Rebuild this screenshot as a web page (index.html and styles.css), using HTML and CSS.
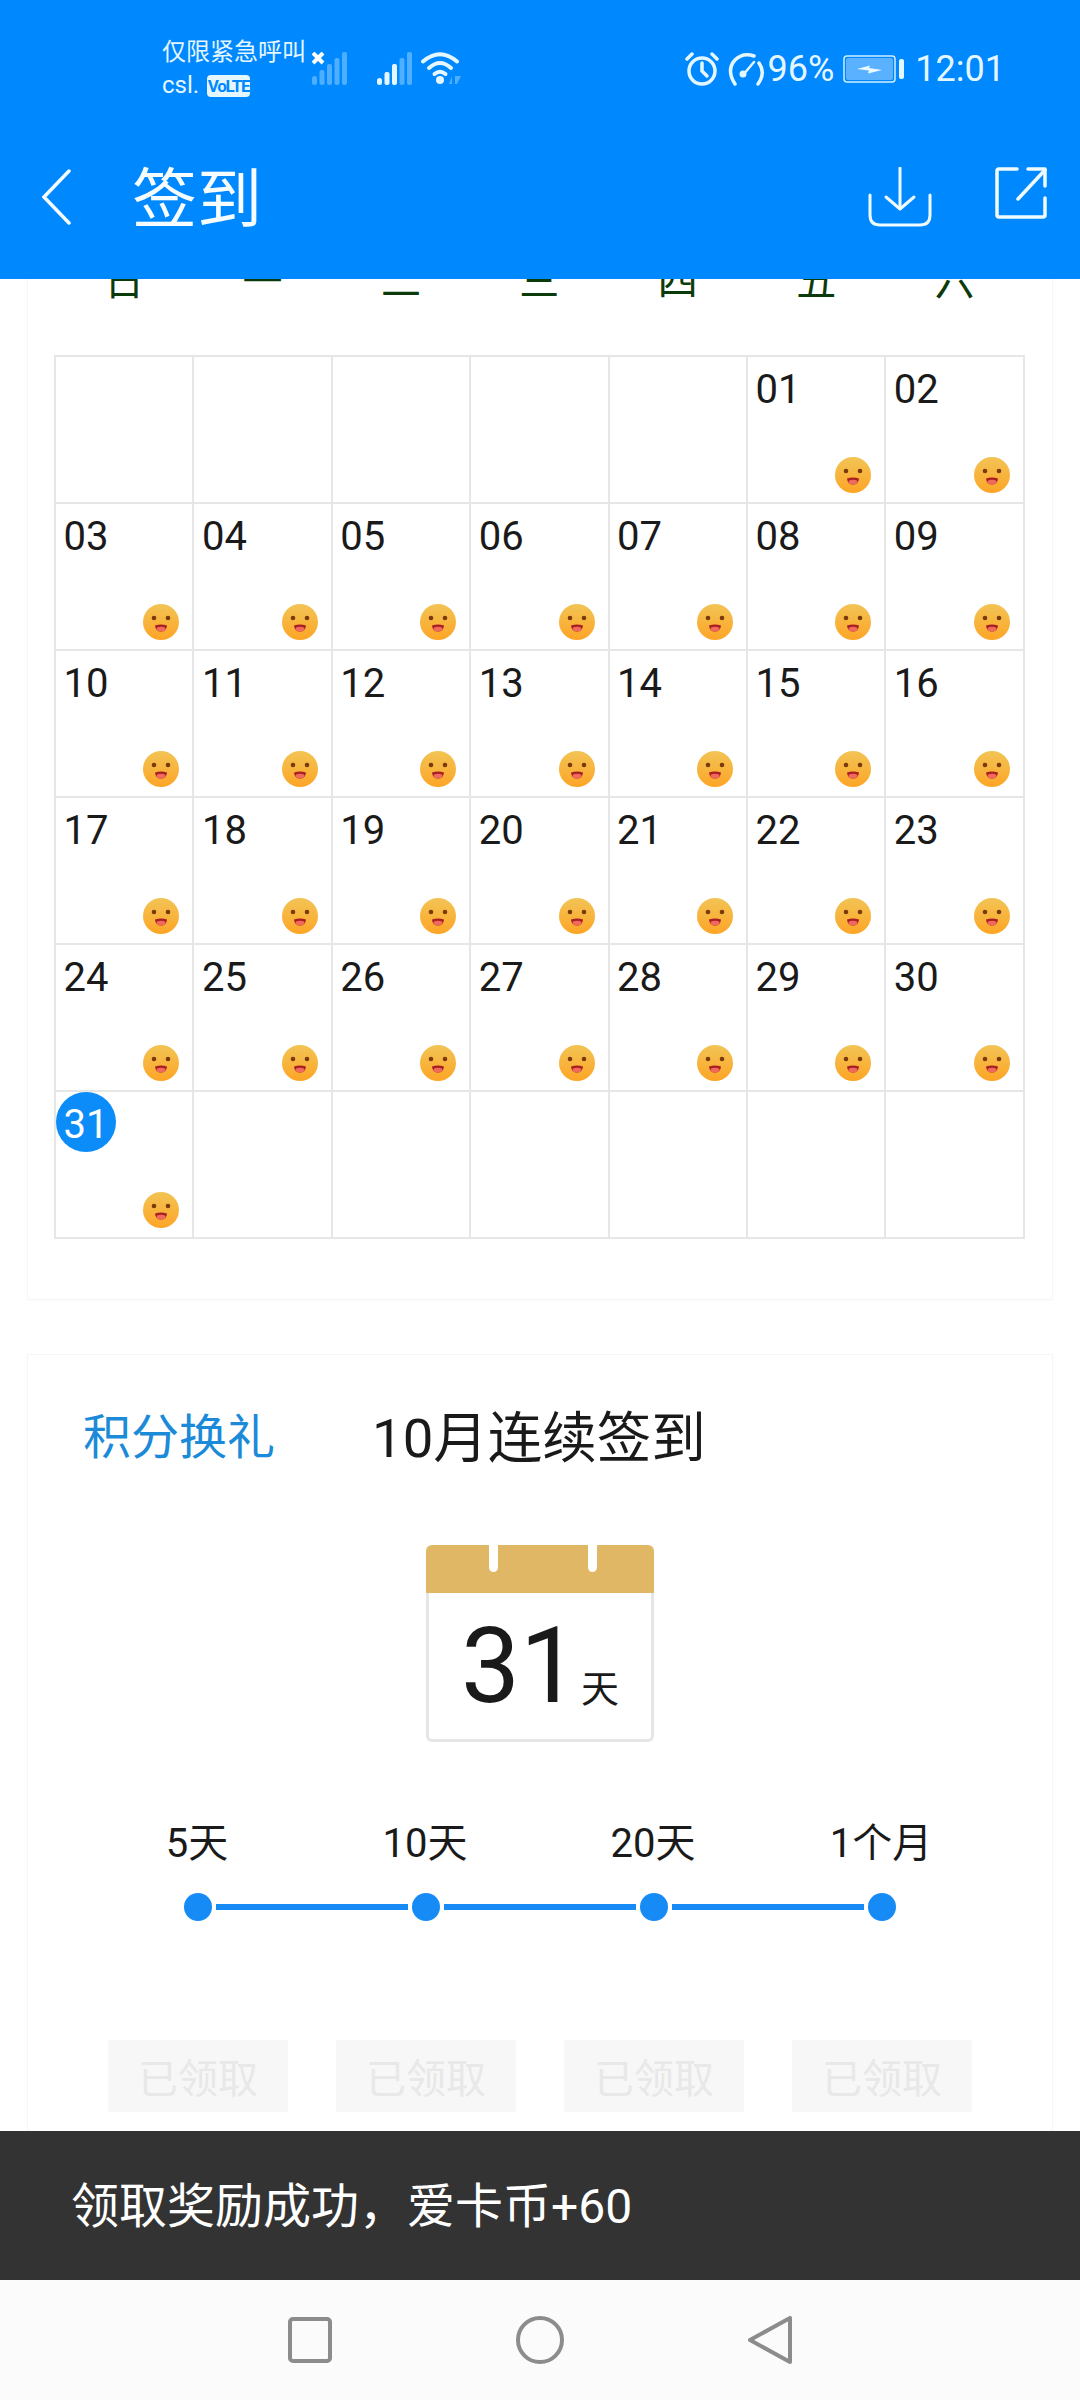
FILE: index.html
```html
<!DOCTYPE html>
<html lang="zh-CN">
<head>
  <meta charset="UTF-8" />
  <meta name="viewport" content="width=device-width, initial-scale=1.0"/>
  <title>签到</title>
  <link rel="stylesheet" href="styles.css">
</head>
<body>
  <!-- Shared emoji face -->
  <svg class="defs" width="0" height="0">
    <defs>
      <linearGradient id="face-fill" x1="0" y1="0" x2="0" y2="1">
        <stop offset="0" stop-color="#f2c455"/>
        <stop offset="1" stop-color="#fda526"/>
      </linearGradient>
      <symbol id="face" viewBox="0 0 36 36">
        <circle cx="18" cy="18" r="18" fill="url(#face-fill)"/>
        <circle cx="11" cy="14" r="2.300" fill="#7b3a0c"/>
        <circle cx="25" cy="14" r="2.300" fill="#7b3a0c"/>
        <path d="M12 21.500 Q18 19.500 24 21.500 Q23.500 27.500 18 27.500 Q12.500 27.500 12 21.500Z" fill="#a81f24"/>
        <ellipse cx="18" cy="25" rx="4.500" ry="2.300" fill="#ef6a5d"/>
      </symbol>
    </defs>
  </svg>

  <div class="page">
    <!-- Blue header -->
    <header class="header">
      <div class="status-bar">
        <div class="carrier">
          <div class="carrier-line">仅限紧急呼叫</div>
          <div class="carrier-line">csl. <span class="volte">VoLTE</span></div>
        </div>
        <div class="signals">
          <svg class="signal" width="35" height="33" viewBox="0 0 35 33">
            <g fill="#dff5ff" opacity="0.35">
              <rect x="0" y="24" width="5" height="9" rx="2.500"/>
              <rect x="7.500" y="18" width="5" height="15" rx="2"/>
              <rect x="15" y="12" width="5" height="21" rx="2"/>
              <rect x="22.500" y="6" width="5" height="27" rx="2"/>
              <rect x="30" y="0" width="5" height="33" rx="2"/>
            </g>
            <path d="M1 1 L11 11 M11 1 L1 11" stroke="#ffffff" stroke-width="4"/>
          </svg>
          <svg class="signal signal-main" width="35" height="33" viewBox="0 0 35 33">
            <g fill="#e4f7ff">
              <rect x="0" y="26" width="5" height="7" rx="2.500"/>
              <rect x="7.500" y="20" width="5" height="13" rx="2"/>
              <rect x="15" y="12" width="5" height="21" rx="2"/>
            </g>
            <g fill="#e4f7ff" opacity="0.35">
              <rect x="22.500" y="6" width="5" height="27" rx="2"/>
              <rect x="30" y="0" width="5" height="33" rx="2"/>
            </g>
          </svg>
          <svg class="wifi" width="40" height="33" viewBox="0 0 40 33">
            <g fill="none" stroke="#e4f7ff" stroke-width="4" stroke-linecap="round">
              <path d="M2 9.500 Q19 -5 36 9.500"/>
              <path d="M8 16 Q19 6 30 16"/>
              <path d="M13.500 22 Q19 17.500 24.500 22"/>
            </g>
            <circle cx="19" cy="28" r="4" fill="#e4f7ff"/>
            <path d="M28 32 L31 24 L31 32Z M34 24 L40 24 L36 32 L34 32Z" fill="#e4f7ff" opacity="0.35"/>
          </svg>
        </div>
        <div class="status-right">
          <svg width="34" height="34" viewBox="0 0 34 34" fill="none" stroke="#e4f7ff" stroke-width="3.500" stroke-linecap="round">
            <circle cx="17" cy="19" r="13"/>
            <path d="M17 11 V19 L22 24"/>
            <path d="M2 7 L7 2 M32 7 L27 2"/>
          </svg>
          <svg class="gauge" width="38" height="34" viewBox="0 0 38 34" fill="none" stroke="#e4f7ff" stroke-width="3.500" stroke-linecap="round">
            <path d="M8 32 Q-1 18 8 8 Q16 0 27 4"/>
            <path d="M32 11 Q39 21 31 32"/>
            <path d="M16 23 L27 10" stroke-width="2.500"/>
            <circle cx="16" cy="22" r="3.500" fill="#e4f7ff" stroke="none"/>
          </svg>
          <span class="battery-text">96%</span>
          <svg class="battery" width="62" height="28" viewBox="0 0 62 28">
            <rect x="1" y="1" width="51" height="26" rx="3" fill="none" stroke="#cfeeff" stroke-width="1.500"/>
            <rect x="3" y="3" width="47" height="22" rx="2" fill="#ffffff" opacity="0.35"/>
            <path d="M14 14 L27 10.500 L26 13 L39 15 L25 18.500 L26 15.500Z" fill="#ecfaff"/>
            <rect x="56" y="4" width="5" height="20" rx="2" fill="#e4f7ff"/>
          </svg>
          <span class="clock">12:01</span>
        </div>
      </div>
      <div class="app-bar">
        <svg class="back" width="30" height="56" viewBox="0 0 30 56" fill="none" stroke="#f4fcff" stroke-width="3.500" stroke-linecap="round">
          <path d="M27 2 L2 28 L27 54"/>
        </svg>
        <h1 class="title">签到</h1>
        <svg class="download" width="64" height="60" viewBox="0 0 64 60" fill="none" stroke="#f0fbff" stroke-width="3" stroke-linecap="round" stroke-linejoin="round">
          <path d="M2 28 V48 Q2 58 12 58 H52 Q62 58 62 48 V28"/>
          <path d="M32 1 V41"/>
          <path d="M18 30 L32 42 L46 30"/>
        </svg>
        <svg class="share" width="52" height="52" viewBox="0 0 52 52" fill="none" stroke="#f0fbff" stroke-width="3.500" stroke-linecap="round" stroke-linejoin="round">
          <path d="M22 2 H4 Q2 2 2 4 V48 Q2 50 4 50 H48 Q50 50 50 48 V31"/>
          <path d="M23 32 L50 3"/>
          <path d="M33 2 H50 V19"/>
        </svg>
      </div>
    </header>

    <!-- Scrolled content -->
    <main class="content">
      <section class="card month-card">
        <div class="weekdays">
          <span>日</span><span>一</span><span>二</span><span>三</span><span>四</span><span>五</span><span>六</span>
        </div>
        <div class="month-grid">
          <div class="cell"></div>
          <div class="cell"></div>
          <div class="cell"></div>
          <div class="cell"></div>
          <div class="cell"></div>
          <div class="cell"><span class="day">01</span><svg class="face"><use href="#face"/></svg></div>
          <div class="cell"><span class="day">02</span><svg class="face"><use href="#face"/></svg></div>

          <div class="cell"><span class="day">03</span><svg class="face"><use href="#face"/></svg></div>
          <div class="cell"><span class="day">04</span><svg class="face"><use href="#face"/></svg></div>
          <div class="cell"><span class="day">05</span><svg class="face"><use href="#face"/></svg></div>
          <div class="cell"><span class="day">06</span><svg class="face"><use href="#face"/></svg></div>
          <div class="cell"><span class="day">07</span><svg class="face"><use href="#face"/></svg></div>
          <div class="cell"><span class="day">08</span><svg class="face"><use href="#face"/></svg></div>
          <div class="cell"><span class="day">09</span><svg class="face"><use href="#face"/></svg></div>

          <div class="cell"><span class="day">10</span><svg class="face"><use href="#face"/></svg></div>
          <div class="cell"><span class="day">11</span><svg class="face"><use href="#face"/></svg></div>
          <div class="cell"><span class="day">12</span><svg class="face"><use href="#face"/></svg></div>
          <div class="cell"><span class="day">13</span><svg class="face"><use href="#face"/></svg></div>
          <div class="cell"><span class="day">14</span><svg class="face"><use href="#face"/></svg></div>
          <div class="cell"><span class="day">15</span><svg class="face"><use href="#face"/></svg></div>
          <div class="cell"><span class="day">16</span><svg class="face"><use href="#face"/></svg></div>

          <div class="cell"><span class="day">17</span><svg class="face"><use href="#face"/></svg></div>
          <div class="cell"><span class="day">18</span><svg class="face"><use href="#face"/></svg></div>
          <div class="cell"><span class="day">19</span><svg class="face"><use href="#face"/></svg></div>
          <div class="cell"><span class="day">20</span><svg class="face"><use href="#face"/></svg></div>
          <div class="cell"><span class="day">21</span><svg class="face"><use href="#face"/></svg></div>
          <div class="cell"><span class="day">22</span><svg class="face"><use href="#face"/></svg></div>
          <div class="cell"><span class="day">23</span><svg class="face"><use href="#face"/></svg></div>

          <div class="cell"><span class="day">24</span><svg class="face"><use href="#face"/></svg></div>
          <div class="cell"><span class="day">25</span><svg class="face"><use href="#face"/></svg></div>
          <div class="cell"><span class="day">26</span><svg class="face"><use href="#face"/></svg></div>
          <div class="cell"><span class="day">27</span><svg class="face"><use href="#face"/></svg></div>
          <div class="cell"><span class="day">28</span><svg class="face"><use href="#face"/></svg></div>
          <div class="cell"><span class="day">29</span><svg class="face"><use href="#face"/></svg></div>
          <div class="cell"><span class="day">30</span><svg class="face"><use href="#face"/></svg></div>

          <div class="cell"><span class="day today">31</span><svg class="face"><use href="#face"/></svg></div>
          <div class="cell"></div>
          <div class="cell"></div>
          <div class="cell"></div>
          <div class="cell"></div>
          <div class="cell"></div>
          <div class="cell"></div>
        </div>
      </section>

      <section class="card reward-card">
        <div class="reward-head">
          <a class="reward-link">积分换礼</a>
          <h2 class="reward-title">10月连续签到</h2>
        </div>

        <div class="streak">
          <div class="streak-top">
            <span class="notch"></span>
            <span class="notch"></span>
          </div>
          <div class="streak-body">
            <span class="streak-num">31</span>
            <span class="streak-unit">天</span>
          </div>
        </div>

        <div class="goals">
          <span>5天</span><span>10天</span><span>20天</span><span>1个月</span>
        </div>

        <div class="track">
          <span class="dot"></span><span class="line"></span>
          <span class="dot"></span><span class="line"></span>
          <span class="dot"></span><span class="line"></span>
          <span class="dot"></span>
        </div>

        <div class="claims">
          <button class="claim">已领取</button>
          <button class="claim">已领取</button>
          <button class="claim">已领取</button>
          <button class="claim">已领取</button>
        </div>
      </section>
    </main>

    <!-- Toast -->
    <div class="toast">领取奖励成功，爱卡币+60</div>

    <!-- Android nav bar -->
    <nav class="nav-bar">
      <svg width="44" height="46" viewBox="0 0 44 46" fill="none" stroke="#8c8c8c" stroke-width="4">
        <rect x="2" y="2" width="40" height="42" rx="3"/>
      </svg>
      <svg width="48" height="48" viewBox="0 0 48 48" fill="none" stroke="#8c8c8c" stroke-width="4">
        <circle cx="24" cy="24" r="22"/>
      </svg>
      <svg width="44" height="48" viewBox="0 0 44 48" fill="none" stroke="#8c8c8c" stroke-width="4" stroke-linejoin="round">
        <path d="M42 2 V46 L2 24Z"/>
      </svg>
    </nav>
  </div>
</body>
</html>
```

FILE: styles.css
```css
* {
  box-sizing: border-box;
}

body {
  margin: 0;
  background-color: #ffffff;
  font-family: Roboto, "Noto Sans CJK SC", sans-serif;
  color: #1a1a1a;
}

.defs {
  display: block;
}

.page {
  display: flex;
  flex-direction: column;
  width: 1080px;
  height: 2400px;
  overflow: hidden;
}

/* Header */
.header {
  flex: none;
  height: 279px;
  background-color: #0088ff;
  color: #e4f7ff;
  position: relative;
  z-index: 1;
}

.status-bar {
  display: flex;
  align-items: center;
  height: 115px;
  padding: 22px 75px 0 162px;
}

.carrier {
  width: 150px;
}

.carrier-line {
  font-size: 24px;
  line-height: 33px;
  white-space: nowrap;
}

.volte {
  display: inline-block;
  width: 43px;
  height: 22px;
  margin-left: 2px;
  border-radius: 4px;
  background-color: #e4f7ff;
  color: #0088ff;
  font-size: 17px;
  font-weight: 700;
  line-height: 22px;
  text-align: center;
  letter-spacing: -1.200px;
  white-space: nowrap;
  vertical-align: 1px;
}

.signals {
  display: flex;
  align-items: center;
  gap: 9px;
}

.signal-main {
  margin-left: 21px;
}

.status-right {
  display: flex;
  align-items: center;
  margin-left: auto;
}

.gauge {
  margin-left: 8px;
}

.battery-text {
  margin-left: 3px;
  font-size: 36px;
}

.battery {
  margin-left: 9px;
}

.clock {
  margin-left: 10px;
  font-size: 36px;
}

.app-bar {
  display: flex;
  align-items: center;
  height: 164px;
  padding: 0 33px 0 42px;
}

.title {
  margin: 6px auto 0 60px;
  font-size: 65px;
  font-weight: 400;
  line-height: 1;
  color: #f7fdff;
}

.download {
  margin-left: 2px;
}

.share {
  margin-left: 63px;
  margin-top: -8px;
}

/* Content */
.content {
  flex: 1;
  min-height: 0;
  overflow: hidden;
  padding: 0 27px;
}

.card {
  background-color: #ffffff;
  border: 1px solid #f6f6f6;
  box-shadow: 0 1px 3px rgba(0, 0, 0, 0.02);
}

.month-card {
  margin-top: -28px;
  padding: 0 26px 60px;
}

.weekdays {
  display: grid;
  grid-template-columns: repeat(7, 138.4px);
  height: 60px;
  margin-bottom: 43px;
  padding-left: 1px;
  font-size: 40px;
  line-height: 60px;
  text-align: center;
  color: #0b3a0b;
}

.month-grid {
  display: grid;
  grid-template-columns: repeat(7, 138.4px);
  width: 971px;
  border-top: 2px solid #e6e6e6;
  border-left: 2px solid #e6e6e6;
}

.cell {
  display: flex;
  flex-direction: column;
  justify-content: space-between;
  height: 147px;
  border-right: 2px solid #e6e6e6;
  border-bottom: 2px solid #e6e6e6;
}

.day {
  width: 60px;
  height: 60px;
  font-size: 40px;
  line-height: 65px;
  text-align: center;
}

.today {
  border-radius: 50%;
  background-color: #0b8cf8;
  color: #ffffff;
}

.face {
  align-self: flex-end;
  width: 36px;
  height: 36px;
  margin: 0 13px 9px 0;
}

.reward-card {
  margin-top: 54px;
  padding: 48px 55px 40px;
}

.reward-head {
  display: flex;
  align-items: center;
  gap: 97px;
  height: 60px;
}

.reward-link {
  font-size: 48px;
  color: #1b8ad8;
}

.reward-title {
  margin: 0;
  font-size: 54.5px;
  font-weight: 400;
}

.streak {
  width: 228px;
  margin: 82px auto 0;
}

.streak-top {
  display: flex;
  gap: 90px;
  height: 48px;
  padding-left: 63px;
  border-radius: 6px 6px 0 0;
  background-color: #dfb765;
}

.notch {
  width: 9px;
  height: 27px;
  border-radius: 0 0 5px 5px;
  background-color: #ffffff;
}

.streak-body {
  display: flex;
  align-items: baseline;
  justify-content: center;
  gap: 2px;
  height: 149px;
  padding-top: 21px;
  border: 3px solid #e6e6e6;
  border-top: none;
  border-radius: 0 0 6px 6px;
}

.streak-num {
  font-size: 105px;
  line-height: 1;
}

.streak-unit {
  font-size: 38px;
  line-height: 1;
}

.goals {
  display: grid;
  grid-template-columns: repeat(4, 228px);
  height: 50px;
  margin-top: 77px;
  font-size: 40px;
  line-height: 50px;
  text-align: center;
}

.track {
  display: flex;
  align-items: center;
  gap: 4px;
  height: 32px;
  margin: 22px 0 0 101px;
}

.dot {
  width: 28px;
  height: 28px;
  border-radius: 50%;
  background-color: #168bf6;
}

.line {
  width: 192px;
  height: 6px;
  background-color: #168bf6;
}

.claims {
  display: flex;
  gap: 48px;
  margin: 117px 0 0 25px;
}

.claim {
  width: 180px;
  height: 72px;
  padding: 0;
  border: none;
  background-color: #f7f7f7;
  color: #e8e8e8;
  font-family: inherit;
  font-size: 40px;
}

/* Toast */
.toast {
  flex: none;
  height: 149px;
  padding-left: 71px;
  background-color: #333333;
  color: #ffffff;
  font-size: 48px;
  line-height: 152px;
}

/* Nav bar */
.nav-bar {
  flex: none;
  display: flex;
  align-items: center;
  justify-content: center;
  gap: 184px;
  height: 120px;
  background-color: #fbfbfb;
}
```
